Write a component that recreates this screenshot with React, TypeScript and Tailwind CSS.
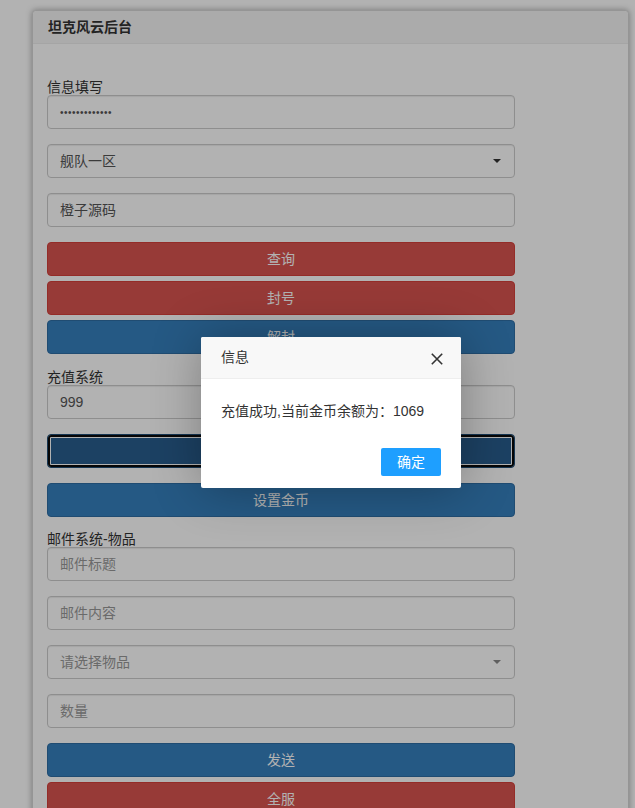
import React from "react";

function Field({ children, placeholder }: { children?: React.ReactNode; placeholder?: boolean }) {
  return (
    <div
      className={`h-[34px] w-full rounded-[4px] border border-[#ccc] bg-white px-[12px] flex items-center shadow-[inset_0_1px_1px_rgba(0,0,0,0.075)] ${
        placeholder ? "text-[#999]" : "text-[#555]"
      }`}
    >
      {children}
    </div>
  );
}

function SelectField({ text, placeholder }: { text: string; placeholder?: boolean }) {
  return (
    <div
      className={`h-[34px] w-full rounded-[4px] border border-[#ccc] bg-white pl-[12px] pr-[13px] flex items-center justify-between shadow-[inset_0_1px_1px_rgba(0,0,0,0.075)] ${
        placeholder ? "text-[#999]" : "text-[#555]"
      }`}
    >
      <span>{text}</span>
      <svg width="8" height="4" viewBox="0 0 8 4">
        <path d="M0 0 L8 0 L4 4 Z" fill={placeholder ? "#888" : "#333"} />
      </svg>
    </div>
  );
}

function Btn({ children, color, className = "" }: { children?: React.ReactNode; color: "red" | "blue" | "focus"; className?: string }) {
  const bg =
    color === "red"
      ? "bg-[#d9534f] border-[#d43f3a]"
      : color === "blue"
      ? "bg-[#3680bd] border-[#2e6da4]"
      : "bg-[#295d8e] border-[#204d74] shadow-[inset_0_0_0_2px_#0a0a0a,inset_0_0_0_3px_#ffffff]";
  return (
    <div className={`h-[34px] w-full rounded-[4px] border ${bg} text-white flex items-center justify-center ${className}`}>
      {children}
    </div>
  );
}

function Label({ children, className = "" }: { children: React.ReactNode; className?: string }) {
  return <div className={`h-[16px] leading-[16px] text-[#333] ${className}`}>{children}</div>;
}

export default function App() {
  return (
    <div className="relative h-[808px] w-full overflow-hidden bg-white font-['Liberation_Sans','Noto_Sans_CJK_SC',sans-serif] text-[14px] text-[#333]">
      <div className="pt-[10px] pl-[32px]">
        <div className="w-[597px] h-[900px] rounded-[4px] border border-[#d6d6d6] bg-white shadow-[0_0_6px_rgba(0,0,0,0.35)]">
          <div className="h-[33px] flex items-center px-[15px] bg-[#f5f5f5] border-b border-[#ececec] rounded-t-[4px] font-bold text-[#333]">
            坦克风云后台
          </div>
          <div className="pl-[14px] pt-[35px] w-[482px] flex flex-col">
            <Label>信息填写</Label>
            <Field>
              <span className="text-[10px] text-[#555] tracking-[0.5px]">•••••••••••••</span>
            </Field>
            <div className="mt-[15px]">
              <SelectField text="舰队一区" />
            </div>
            <div className="mt-[15px]">
              <Field>橙子源码</Field>
            </div>
            <Btn color="red" className="mt-[15px]">查询</Btn>
            <Btn color="red" className="mt-[5px]">封号</Btn>
            <Btn color="blue" className="mt-[5px]">解封</Btn>

            <Label className="mt-[15px]">充值系统</Label>
            <Field>999</Field>
            <Btn color="focus" className="mt-[15px]">充值</Btn>
            <Btn color="blue" className="mt-[15px]">设置金币</Btn>

            <Label className="mt-[14px]">邮件系统-物品</Label>
            <Field placeholder>邮件标题</Field>
            <div className="mt-[15px]">
              <Field placeholder>邮件内容</Field>
            </div>
            <div className="mt-[15px]">
              <SelectField text="请选择物品" placeholder />
            </div>
            <div className="mt-[15px]">
              <Field placeholder>数量</Field>
            </div>
            <Btn color="blue" className="mt-[15px]">发送</Btn>
            <Btn color="red" className="mt-[5px]">全服</Btn>
          </div>
        </div>
      </div>

      {/* shade */}
      <div className="absolute inset-0 bg-black/30" />

      {/* dialog */}
      <div className="absolute left-[201px] top-[337px] w-[260px] rounded-[2px] bg-white shadow-[1px_1px_50px_rgba(0,0,0,0.3)]">
        <div className="relative h-[42px] flex items-center pl-[20px] bg-[#f8f8f8] border-b border-[#eee] rounded-t-[2px] text-[#333]">
          信息
          <svg className="absolute right-[18px] top-[16px]" width="12" height="12" viewBox="0 0 12 12">
            <path d="M0.8 0.8 L11.2 11.2 M11.2 0.8 L0.8 11.2" stroke="#333" strokeWidth="1.6" />
          </svg>
        </div>
        <div className="p-[20px] leading-[24px] text-[#333]">充值成功,当前金币余额为：1069</div>
        <div className="flex justify-end px-[15px] pb-[12px]">
          <div className="mt-[5px] mr-[5px] h-[28px] px-[16px] rounded-[2px] bg-[#1e9fff] text-white flex items-center">确定</div>
        </div>
      </div>
    </div>
  );
}
